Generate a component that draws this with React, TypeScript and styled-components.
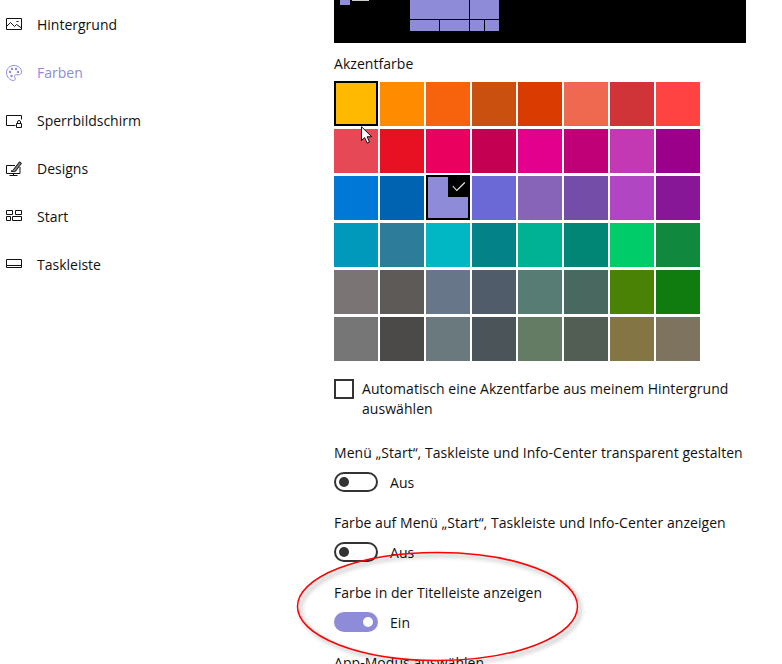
import React from "react";
import styled, { createGlobalStyle } from "styled-components";

const accent = "#8E8CD8";

const swatches = [
  ["#FFB900", "#FF8C00", "#F7630C", "#CA5010", "#DA3B01", "#EF6950", "#D13438", "#FF4343"],
  ["#E74856", "#E81123", "#EA005E", "#C30052", "#E3008C", "#BF0077", "#C239B3", "#9A0089"],
  ["#0078D7", "#0063B1", "#8E8CD8", "#6B69D6", "#8764B8", "#744DA9", "#B146C2", "#881798"],
  ["#0099BC", "#2D7D9A", "#00B7C3", "#038387", "#00B294", "#018574", "#00CC6A", "#10893E"],
  ["#7A7574", "#5D5A58", "#68768A", "#515C6B", "#567C73", "#486860", "#498205", "#107C10"],
  ["#767676", "#4C4A48", "#69797E", "#4A5459", "#647C64", "#525E54", "#847545", "#7E735F"],
];

const HintergrundIcon = () => (
  <svg width="16" height="16" viewBox="0 0 16 16" fill="none" stroke="currentColor">
    <path d="M0.500 1.500h15v11h-15z" />
    <path d="M0.500 9.500l4-4 4 4 2-2 5 3.500" />
    <path d="M10.500 4.500h2" />
  </svg>
);

const FarbenIcon = () => (
  <svg width="16" height="16" viewBox="0 0 16 16" fill="none" stroke="currentColor">
    <path d="M8 .5C3.800.5.500 3.600.500 7.600c0 4.300 3.400 7.900 7 7.900 1.300 0 1.800-.8 1.800-1.700 0-1.200-.9-1.500-.9-2.500 0-1 .8-1.500 1.800-1.500h2.300c1.500 0 2.900-.8 3-2.700C15.600 3.400 12.200.5 8 .5z" />
    <circle cx="4" cy="7" r="1.200" fill="currentColor" stroke="none" />
    <circle cx="6" cy="4" r="1.200" fill="currentColor" stroke="none" />
    <circle cx="10" cy="4" r="1.200" fill="currentColor" stroke="none" />
    <circle cx="5.500" cy="11" r="1.200" fill="currentColor" stroke="none" />
    <circle cx="12" cy="7" r="1.200" fill="currentColor" stroke="none" />
  </svg>
);

const SperrIcon = () => (
  <svg width="16" height="16" viewBox="0 0 16 16" fill="none" stroke="currentColor">
    <path d="M9.500 12.500h-9v-10h15v4" />
    <path d="M10.500 10.500h5v4h-5z" />
    <path d="M11.500 10.500V9a1.500 1.500 0 0 1 3 0v1.500" />
  </svg>
);

const DesignsIcon = () => (
  <svg width="16" height="16" viewBox="0 0 16 16" fill="none" stroke="currentColor">
    <path d="M9 4.500H.5v8h13.500V6" />
    <path d="M7.500 12.500v2M3.500 14.500h8" />
    <path d="M5 10c1.500 0 2-.5 2.500-1.500L13.500.8l2 1.500-6 8c-1.200.5-3 .5-4.500-.3z" fill="currentColor" fillOpacity="0.55" />
  </svg>
);

const StartIcon = () => (
  <svg width="16" height="16" viewBox="0 0 16 16" fill="none" stroke="currentColor">
    <path d="M.5 1.500h6v4h-6zM9.500 1.500h6v4h-6zM.5 7.500h4v4h-4zM6.500 7.500h9v4h-9z" />
  </svg>
);

const TaskleisteIcon = () => (
  <svg width="16" height="16" viewBox="0 0 16 16" fill="none" stroke="currentColor">
    <path d="M.5 2.500h15v8h-15z" />
    <path d="M.5 8.500h15" />
  </svg>
);

const navItems = [
  { label: "Hintergrund", icon: <HintergrundIcon /> },
  { label: "Farben", icon: <FarbenIcon />, active: true },
  { label: "Sperrbildschirm", icon: <SperrIcon /> },
  { label: "Designs", icon: <DesignsIcon /> },
  { label: "Start", icon: <StartIcon /> },
  { label: "Taskleiste", icon: <TaskleisteIcon /> },
];

const toggles = [
  { label: "Menü „Start“, Taskleiste und Info-Center transparent gestalten", on: false },
  { label: "Farbe auf Menü „Start“, Taskleiste und Info-Center anzeigen", on: false },
  { label: "Farbe in der Titelleiste anzeigen", on: true },
];

const App = () => {
  return (
    <>
      <GlobalStyle />
      <Page>
        <Sidebar>
          {navItems.map((item) => (
            <NavItem key={item.label} $active={item.active}>
              <NavIcon>{item.icon}</NavIcon>
              {item.label}
            </NavItem>
          ))}
        </Sidebar>

        <Main>
          <Preview>
            <PreviewWindow>
              <PreviewDot />
              <PreviewBar />
            </PreviewWindow>
            <PreviewStart>
              <TileRow $height={19}>
                <Tile $width={59} />
                <Tile $width={29} />
              </TileRow>
              <TileRow $height={11}>
                <Tile $width={29} />
                <Tile $width={29} />
                <Tile $width={14} />
                <Tile $width={14} />
              </TileRow>
            </PreviewStart>
          </Preview>

          <Heading>Akzentfarbe</Heading>
          <SwatchGrid>
            {swatches.flat().map((color, index) => (
              <Swatch key={index} $color={color} $framed={index === 0 || index === 18}>
                {index === 0 && (
                  <Cursor width="12" height="18" viewBox="0 0 13 19">
                    <path
                      d="M.5.500v15l3.500-3.200 2.700 6 2.500-1.100-2.600-5.800h5z"
                      fill="#fff"
                      stroke="#000"
                    />
                  </Cursor>
                )}
                {index === 18 && (
                  <CheckCorner>
                    <svg width="14" height="14" viewBox="0 0 14 14" fill="none" stroke="#eee" strokeWidth="1.100">
                      <path d="M.8 7l4 4.500L12.800 3.500" />
                    </svg>
                  </CheckCorner>
                )}
              </Swatch>
            ))}
          </SwatchGrid>

          <CheckRow>
            <CheckBox />
            <CheckLabel>Automatisch eine Akzentfarbe aus meinem Hintergrund auswählen</CheckLabel>
          </CheckRow>

          {toggles.map((toggle) => (
            <ToggleBlock key={toggle.label}>
              <Label>{toggle.label}</Label>
              <ToggleRow>
                <Toggle $on={toggle.on}>
                  <Knob $on={toggle.on} />
                </Toggle>
                <ToggleState>{toggle.on ? "Ein" : "Aus"}</ToggleState>
              </ToggleRow>
            </ToggleBlock>
          ))}

          <NextSection>App-Modus auswählen</NextSection>
        </Main>

        <Annotation width="300" height="124" viewBox="0 0 300 124" fill="none">
          <ellipse cx="148.500" cy="58.500" rx="140" ry="54" stroke="#f00" strokeWidth="1.500" />
        </Annotation>
      </Page>
    </>
  );
};

export default App;

const GlobalStyle = createGlobalStyle`
  html, body {
    margin: 0;
    height: 664px;
    overflow: hidden;
    background: #fff;
  }
  body {
    font-family: "Open Sans", "Noto Sans", sans-serif;
    font-size: 14px;
    line-height: 20px;
    color: #111;
  }
`;

const Page = styled.div`
  position: relative;
  display: flex;
  width: 782px;
  height: 664px;
  overflow: hidden;
`;

const Sidebar = styled.nav`
  width: 334px;
  flex-shrink: 0;
  padding-top: 1px;
`;

const NavItem = styled.div<{ $active?: boolean }>`
  display: flex;
  align-items: center;
  height: 48px;
  padding-left: 6px;
  color: ${(props) => (props.$active ? accent : "#111")};
`;

const NavIcon = styled.span`
  display: flex;
  width: 16px;
  height: 16px;
  margin-right: 15px;
`;

const Main = styled.main`
  width: 412px;
  letter-spacing: 0.05px;
`;

const Preview = styled.div`
  position: relative;
  height: 43px;
  background: #000;
`;

const PreviewWindow = styled.div`
  position: absolute;
  top: 0;
  left: 6px;
  display: flex;
  gap: 2px;
  align-items: flex-start;
`;

const PreviewDot = styled.div`
  width: 10px;
  height: 5px;
  background: ${accent};
`;

const PreviewBar = styled.div`
  width: 17px;
  height: 1px;
  background: #ccc;
`;

const PreviewStart = styled.div`
  position: absolute;
  top: 0;
  left: 76px;
  display: flex;
  flex-direction: column;
  gap: 1px;
`;

const TileRow = styled.div<{ $height: number }>`
  display: flex;
  gap: 1px;
  height: ${(props) => props.$height}px;
`;

const Tile = styled.div<{ $width: number }>`
  width: ${(props) => props.$width}px;
  background: ${accent};
`;

const Heading = styled.div`
  margin-top: 11px;
`;

const SwatchGrid = styled.div`
  display: grid;
  grid-template-columns: repeat(8, 44px);
  grid-auto-rows: 44px;
  column-gap: 2px;
  row-gap: 3px;
  margin-top: 8px;
`;

const Swatch = styled.div<{ $color: string; $framed?: boolean }>`
  position: relative;
  background: ${(props) => props.$color};

  ${(props) =>
    props.$framed &&
    `&::after {
      content: "";
      position: absolute;
      inset: -1px 0 0 0;
      border: 2px solid #000;
    }`}
`;

const Cursor = styled.svg`
  position: absolute;
  top: 44px;
  left: 27px;
  z-index: 2;
`;

const CheckCorner = styled.div`
  position: absolute;
  top: -1px;
  right: 0;
  display: flex;
  align-items: center;
  justify-content: center;
  width: 22px;
  height: 22px;
  background: #000;
`;

const CheckRow = styled.div`
  display: flex;
  gap: 8px;
  margin-top: 18px;
`;

const CheckBox = styled.div`
  width: 20px;
  height: 20px;
  flex-shrink: 0;
  box-sizing: border-box;
  border: 2px solid #333;
`;

const CheckLabel = styled.div`
  width: 390px;
`;

const ToggleBlock = styled.div`
  margin-top: 24px;

  & + & {
    margin-top: 21px;
  }
`;

const Label = styled.div`
  white-space: nowrap;
`;

const NextSection = styled(Label)`
  margin-top: 21px;
`;

const ToggleRow = styled.div`
  display: flex;
  align-items: center;
  gap: 12px;
  height: 20px;
  margin-top: 9px;
`;

const ToggleState = styled.span`
  padding-top: 2px;
`;

const Toggle = styled.div<{ $on: boolean }>`
  display: flex;
  align-items: center;
  justify-content: ${(props) => (props.$on ? "flex-end" : "flex-start")};
  box-sizing: border-box;
  width: 44px;
  height: 20px;
  padding: 0 3px;
  border: 2px solid ${(props) => (props.$on ? accent : "#333")};
  border-radius: 10px;
  background: ${(props) => (props.$on ? accent : "transparent")};
`;

const Knob = styled.div<{ $on: boolean }>`
  width: 10px;
  height: 10px;
  border-radius: 50%;
  background: ${(props) => (props.$on ? "#fff" : "#333")};
`;

const Annotation = styled.svg`
  position: absolute;
  top: 548px;
  left: 289px;
  filter: drop-shadow(3px 3px 2px rgba(0, 0, 0, 0.4));
`;
